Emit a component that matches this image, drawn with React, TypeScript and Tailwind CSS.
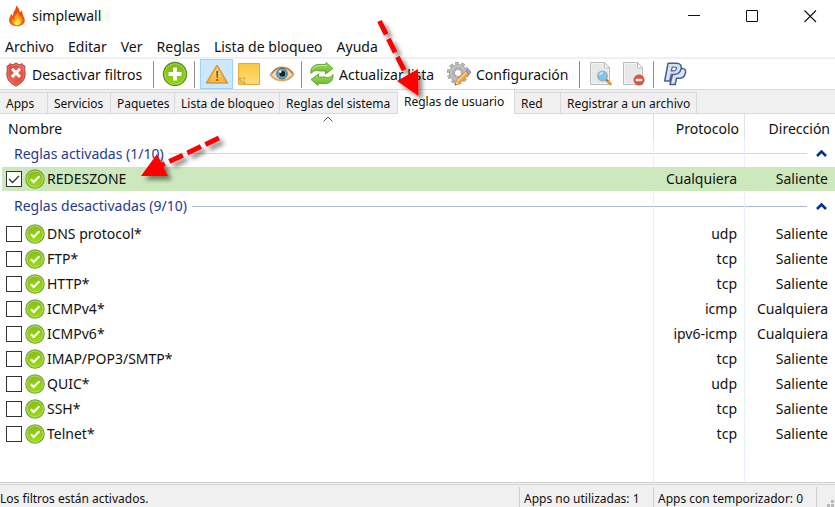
import type { ReactNode } from "react";

const MENU = ["Archivo", "Editar", "Ver", "Reglas", "Lista de bloqueo", "Ayuda"];

const TABS = [
  { label: "Apps", width: "w-[48px]" },
  { label: "Servicios", width: "w-[63px]" },
  { label: "Paquetes", width: "w-[64px]" },
  { label: "Lista de bloqueo", width: "w-[105px]" },
  { label: "Reglas del sistema", width: "w-[118px]" },
  { label: "Reglas de usuario", width: "w-[117px]", active: true },
  { label: "Red", width: "w-[46px]" },
  { label: "Registrar a un archivo", width: "w-[136px]" },
];

const ENABLED = [{ name: "REDESZONE", protocol: "Cualquiera", direction: "Saliente" }];

const DISABLED = [
  { name: "DNS protocol*", protocol: "udp", direction: "Saliente" },
  { name: "FTP*", protocol: "tcp", direction: "Saliente" },
  { name: "HTTP*", protocol: "tcp", direction: "Saliente" },
  { name: "ICMPv4*", protocol: "icmp", direction: "Cualquiera" },
  { name: "ICMPv6*", protocol: "ipv6-icmp", direction: "Cualquiera" },
  { name: "IMAP/POP3/SMTP*", protocol: "tcp", direction: "Saliente" },
  { name: "QUIC*", protocol: "udp", direction: "Saliente" },
  { name: "SSH*", protocol: "tcp", direction: "Saliente" },
  { name: "Telnet*", protocol: "tcp", direction: "Saliente" },
];

function Flame() {
  return (
    <svg width="18" height="22" viewBox="0 0 18 22">
      <defs>
        <linearGradient id="flame" x1="0" y1="0" x2="0" y2="1">
          <stop offset="0" stopColor="#e8400c" />
          <stop offset="1" stopColor="#f5690f" />
        </linearGradient>
      </defs>
      <path
        d="M8 0.500c2 1.500 3.200 3.300 3.400 5.500 .1 1 .9 1.300 1.400.4.400-.7.200-1.500.2-1.500 1.600 1.800 1.700 3.600 2 5 .4 1.700 2 3.200 1.800 5.800-.2 3.200-3.300 5.500-7.800 5.500S1.300 19 1 15.500c-.2-2.400 1.400-3.500 1.600-5.200.1-.9 0-1.500 0-1.500 1.200.6 1.300 1.700 1.900 1.800.8 0 .6-1.300.9-2.600C5.900 5.600 8.600 4 8 .5z"
        fill="url(#flame)"
      />
      <path
        d="M9.500 7c1.500 1.700.9 3.500 1.700 4.300.7.500 1.100-.6 1.100-.6 1.100 1.500 2 3 1.800 5-.2 2.600-2.200 4.500-5 4.500S4.100 18.300 4 16c-.1-1.700.8-2.300.8-2.300s.7 1.300 1.300 1c.8-.5-.2-2 .8-3.600C7.700 9.800 9.400 9 9.500 7z"
        fill="#ff9a1a"
      />
      <path
        d="M9.600 12c.8 1.200.6 2.300 1.300 2.600.6.100.9-.6.900-.6.600 1 .9 1.700.8 2.800-.2 2-1.600 3.500-3.500 3.500s-3.200-1.300-3.200-3c0-.9.300-1.300.3-1.300s.6.900 1.200.6c.9-.6 1.500-2.100 2.200-4.600z"
        fill="#ffe14a"
      />
    </svg>
  );
}

function Shield() {
  return (
    <svg width="20" height="25" viewBox="0 0 20 25">
      <defs>
        <linearGradient id="shield" x1="0" y1="0" x2="1" y2="1">
          <stop offset="0" stopColor="#cf4038" />
          <stop offset=".5" stopColor="#f0604d" />
          <stop offset="1" stopColor="#cf3a30" />
        </linearGradient>
      </defs>
      <path
        d="M10 .8C8.500 2.300 7 2.800 5.500 2.600L4 1.500Q3.500 3.500 1 4.300C1.800 7 .7 10 .9 13c.3 5 3.700 8.500 9.100 11 5.400-2.500 8.800-6 9.100-11 .2-3-.9-6-.1-8.700Q16.500 3.500 16 1.500l-1.500 1.100C13 2.800 11.500 2.300 10 .8z"
        fill="url(#shield)"
        stroke="#a14540"
      />
      <path d="M10 2.300C8.400 3.700 7 4 5.300 3.900L4.500 3.400Q3.800 4.600 2.300 5.100C2.800 7.800 1.800 10.300 2 12.900c.3 4.400 3.300 7.500 8 9.900 4.700-2.400 7.700-5.500 8-9.900.2-2.600-.8-5.100-.3-7.800Q16.200 4.600 15.500 3.400l-.8.500C13 4 11.600 3.700 10 2.300z" fill="none" stroke="#f08a7e" strokeWidth=".7" />
      <path d="M6 6.800l8 8.200M14 6.800L6 15" stroke="#fff" strokeWidth="3" />
    </svg>
  );
}

function Plus() {
  return (
    <svg width="26" height="26" viewBox="0 0 26 26">
      <defs>
        <linearGradient id="plus" x1="0" y1="0" x2="0" y2="1">
          <stop offset="0" stopColor="#82b81d" />
          <stop offset="1" stopColor="#8ed60c" />
        </linearGradient>
      </defs>
      <circle cx="13" cy="13" r="11.500" fill="url(#plus)" stroke="#559013" strokeWidth="1.300" />
      <circle cx="13" cy="13" r="10.300" fill="none" stroke="#b5dc63" strokeWidth=".8" />
      <path d="M13 6.500v13M6.500 13h13" stroke="#fff" strokeWidth="3.800" />
    </svg>
  );
}

function Warning() {
  return (
    <svg width="24" height="22" viewBox="0 0 24 22">
      <defs>
        <linearGradient id="warn" x1="0" y1="0" x2="0" y2="1">
          <stop offset="0" stopColor="#ffda76" />
          <stop offset="1" stopColor="#f8b13a" />
        </linearGradient>
      </defs>
      <path d="M12 2.500L22.500 20H1.500z" fill="url(#warn)" stroke="#dc9a35" strokeWidth="1.500" strokeLinejoin="round" />
      <path d="M11.300 8h1.800l-.4 7h-1z" fill="#55514b" />
      <circle cx="12.200" cy="17" r="1" fill="#55514b" />
    </svg>
  );
}

function Note() {
  return (
    <svg width="24" height="24" viewBox="0 0 24 24">
      <defs>
        <linearGradient id="note" x1="0" y1="0" x2="0" y2="1">
          <stop offset="0" stopColor="#fbc640" />
          <stop offset="1" stopColor="#ffdc7d" />
        </linearGradient>
      </defs>
      <path d="M1.500 1.500h21v21H8.500l-7-6.500z" fill="url(#note)" stroke="#e2a93b" />
      <path d="M1.500 16v6.500h7z" fill="#f4bd4d" stroke="#dfa437" strokeWidth=".8" />
      <path d="M1.500 16q4 2 6-.5q-1.500 4 1 7z" fill="#fce3a0" stroke="#d99c30" strokeWidth=".9" />
    </svg>
  );
}

function Eye() {
  return (
    <svg width="26" height="18" viewBox="0 0 26 18">
      <path d="M1.500 10C5 4.500 8.300 2.500 13 2.500s8.800 2.500 11.500 6.900C21.500 13.500 17.500 15.500 13 15.500S4.500 14 1.500 10z" fill="#ead9bf" stroke="#dba667" strokeWidth="1.800" />
      <path d="M2.500 8.500C6 3.700 9 2.300 13 2.300s7.800 1.800 10.800 6.400" fill="none" stroke="#b0773c" strokeWidth="1.200" />
      <circle cx="13" cy="8.700" r="5.300" fill="#6fa2bd" stroke="#477083" />
      <circle cx="13.300" cy="8.700" r="2.900" fill="#172327" />
      <circle cx="11.300" cy="6.600" r="1.300" fill="#f1f8fb" />
    </svg>
  );
}

function Refresh() {
  return (
    <svg width="26" height="26" viewBox="0 0 26 26">
      <defs>
        <linearGradient id="fresh" x1="0" y1="0" x2="0" y2="1">
          <stop offset="0" stopColor="#a2db5e" />
          <stop offset="1" stopColor="#65b929" />
        </linearGradient>
      </defs>
      <g fill="url(#fresh)" stroke="#5aa32a" strokeWidth=".9" strokeLinejoin="round">
        <path d="M2 12.500C1 6.500 5.500 3 11 3.400h6V1.500l7 6-7.500 5.500v-3h-5.500C8 9.500 5.500 8.500 2 12.500z" />
        <path d="M24 13.500c1 6-3.500 9.500-9 9.100H9v1.900l-7-6L9.500 13v3H15c3 .5 5.500 1.500 9-2.500z" />
      </g>
      <path d="M3.500 9C5 5.800 8 4.300 12 4.600h5.500" fill="none" stroke="#cdeeaa" strokeWidth=".8" />
    </svg>
  );
}

function Gear() {
  return (
    <svg width="26" height="26" viewBox="0 0 26 26">
      <circle cx="12" cy="12" r="9.300" fill="none" stroke="#969696" strokeWidth="3.600" strokeDasharray="3.400 2.443" />
      <circle cx="12" cy="12" r="9.300" fill="none" stroke="#bdbdbd" strokeWidth="2.400" strokeDasharray="2.400 3.443" strokeDashoffset="-.5" />
      <circle cx="12" cy="12" r="6" fill="none" stroke="#969696" strokeWidth="6" />
      <circle cx="12" cy="12" r="6" fill="none" stroke="#bfbfbf" strokeWidth="4.800" />
      <circle cx="12" cy="12" r="5" fill="none" stroke="#a4a4a4" strokeWidth="1" />
      <path d="M9 24l1.300-4.200L20 10.200l3.200 3-9.700 9.500z" fill="#f6a940" stroke="#cc7b2e" strokeWidth=".8" />
      <path d="M11 20.500L20.500 11" stroke="#ffda8d" strokeWidth="1.200" />
      <path d="M20 10.200l1.300-1.300q1.200-.8 2.500.5 1.400 1.300.6 2.500l-1.200 1.300z" fill="#a9a0d0" stroke="#7d76ad" strokeWidth=".8" />
      <path d="M9 24l1.300-4.200 3.200 2.900z" fill="#f8dfb9" stroke="#be803c" strokeWidth=".6" />
      <path d="M9 24l.5-1.600 1.100 1.100z" fill="#444" />
    </svg>
  );
}

function Doc({ children }: { children: ReactNode }) {
  return (
    <svg width="24" height="26" viewBox="0 0 24 26">
      <path d="M1.500 1.500h14l5 5.500v16.500h-19z" fill="#f4f5f5" stroke="#b9bdbd" />
      <path d="M2.800 2.800h12v5h4.500v14.400H2.800z" fill="#e6e9e9" />
      <path d="M15.500 1.500V7h5z" fill="#fdfdfd" stroke="#b9bdbd" strokeLinejoin="round" />
      {children}
    </svg>
  );
}

function DocSearch() {
  return (
    <Doc>
      <path d="M18.500 20l3 3" stroke="#e59a38" strokeWidth="3" strokeLinecap="round" />
      <path d="M16.500 18l2 2" stroke="#787878" strokeWidth="2" />
      <circle cx="13.500" cy="15" r="4.800" fill="#7cc6ef" stroke="#a3a9ab" strokeWidth="1.300" />
      <path d="M10.500 14q1-2.500 3.500-2.300" stroke="#d5f0ff" strokeWidth="1.500" fill="none" />
    </Doc>
  );
}

function DocRemove() {
  return (
    <Doc>
      <circle cx="17" cy="19" r="5" fill="#e9513d" stroke="#d2483b" />
      <path d="M13.700 19h6.600" stroke="#fff" strokeWidth="2.400" />
    </Doc>
  );
}

function PayPal() {
  return (
    <svg width="25" height="26" viewBox="0 0 25 26">
      <g strokeLinejoin="round" stroke="#3f6299" strokeWidth="1.500">
        <path d="M11 7.500h8.500c2.500 0 3.500 1.800 3 4.300-.8 3.800-3 5.400-6.200 5.400h-2.800l-1.300 6.300H7z" fill="#dfe4ea" />
        <path d="M5 2.300h8.300c4 0 5.500 2.100 4.800 5.400-.9 4.200-3.500 5.800-7.300 5.800H8.300L6.800 20H1.700z" fill="#d9e0e9" />
        <path d="M9.300 6h2.200c1.600 0 2.200.7 1.900 1.900-.3 1.500-1.300 2-2.800 2H8.400z" fill="#fff" strokeWidth="1.200" />
      </g>
    </svg>
  );
}

function GreenCheck() {
  return (
    <svg className="shrink-0" width="20" height="20" viewBox="0 0 20 20" aria-hidden="true">
      <defs>
        <linearGradient id="ok" x1="0" y1="0" x2="0" y2="1">
          <stop offset="0" stopColor="#86bb1c" />
          <stop offset="1" stopColor="#9be00c" />
        </linearGradient>
      </defs>
      <circle cx="10" cy="10" r="9.200" fill="url(#ok)" stroke="#76a53c" strokeWidth="1.200" />
      <circle cx="10" cy="10" r="8.100" fill="none" stroke="#bfe084" strokeWidth=".8" />
      <path d="M5.800 10.200l2.900 2.800 5.700-5.800" fill="none" stroke="#fff" strokeWidth="2.200" />
    </svg>
  );
}

function Separator({ className }: { className: string }) {
  return <span className={`h-[27px] w-px shrink-0 bg-[#8c8c8c] ${className}`} />;
}

function Tool({ label, className, children }: { label: string; className: string; children: ReactNode }) {
  return (
    <button type="button" aria-label={label} className={`flex h-[30px] shrink-0 items-center justify-center ${className}`}>
      {children}
    </button>
  );
}

type Rule = { name: string; protocol: string; direction: string };

function RuleRow({ rule, checked = false }: { rule: Rule; checked?: boolean }) {
  const line = checked ? "border-[#cde8bc]" : "border-[#e6f1fc]";
  return (
    <tr className={checked ? "h-6" : "h-[25px]"}>
      <td className="p-0 pl-[2px]">
        <label className={`flex items-center pl-1 ${checked ? "h-6 bg-[#cde8bc]" : "h-[25px]"}`}>
          <span className="relative mr-[3px] flex size-4">
            <input
              type="checkbox"
              defaultChecked={checked}
              className="peer size-4 appearance-none border border-[#333] bg-white"
            />
            <svg className="pointer-events-none absolute inset-0 hidden peer-checked:block" width="16" height="16" viewBox="0 0 16 16">
              <path d="M3 8l3.500 3.500L13 5" fill="none" stroke="#333" strokeWidth="1.300" />
            </svg>
          </span>
          <GreenCheck />
          <span className="ml-[2px]">{rule.name}</span>
        </label>
      </td>
      <td className={`border-l p-0 pr-[7px] text-right ${line} ${checked ? "bg-[#cde8bc]" : ""}`}>{rule.protocol}</td>
      <td className={`border-l p-0 pr-[7px] text-right ${line} ${checked ? "bg-[#cde8bc]" : ""}`}>{rule.direction}</td>
    </tr>
  );
}

function GroupRow({ title, className, line }: { title: string; className: string; line: string }) {
  return (
    <tr className={`text-[#1f3a93] ${className}`}>
      <th scope="rowgroup" className="p-0 pl-[14px] font-normal">
        <div className="flex items-center gap-[5px]">
          <span className="whitespace-nowrap">{title}</span>
          <span className={`h-px flex-1 ${line}`} />
        </div>
      </th>
      <td className="border-l border-[#e6f1fc] p-0">
        <div className={`h-px ${line}`} />
      </td>
      <td className="border-l border-[#e6f1fc] p-0 pr-2">
        <div className="flex items-center gap-[9px]">
          <span className={`h-px flex-1 ${line}`} />
          <button type="button" aria-label="Contraer grupo">
            <svg className="block" width="11" height="7" viewBox="0 0 11 7">
              <path d="M1 6l4.500-4.500L10 6" fill="none" stroke="#003399" strokeWidth="2.600" />
            </svg>
          </button>
        </div>
      </td>
    </tr>
  );
}

export default function App() {
  return (
    <div className="relative flex h-screen flex-col overflow-hidden bg-white font-['Noto_Sans','Open_Sans',sans-serif] text-[14px] leading-5 text-[#111]">
      <header className="flex h-[32px] shrink-0 items-center pl-2">
        <Flame />
        <h1 className="ml-[6px] flex-1">simplewall</h1>
        <button type="button" aria-label="Minimizar" className="flex h-[30px] w-[58px] items-center justify-center">
          <svg width="13" height="13" viewBox="0 0 13 13"><path d="M0 5.500h12" stroke="#111" /></svg>
        </button>
        <button type="button" aria-label="Maximizar" className="flex h-[30px] w-[58px] items-center justify-center">
          <svg width="13" height="13" viewBox="0 0 13 13"><path d="M.5.5h11v11H.5z" fill="none" stroke="#111" /></svg>
        </button>
        <button type="button" aria-label="Cerrar" className="flex h-[30px] w-[54px] items-center justify-center pl-1">
          <svg width="13" height="13" viewBox="0 0 13 13"><path d="M.5.500l11.500 11.500M12 .500L.5 12" stroke="#111" strokeWidth="1.100" /></svg>
        </button>
      </header>

      <nav className="flex h-[27px] shrink-0 items-end gap-[14px] border-b-2 border-[#f0f0f0] pl-[5px]">
        {MENU.map((item) => (
          <button key={item} type="button" className="h-5 whitespace-nowrap">{item}</button>
        ))}
      </nav>

      <div className="flex h-[31px] shrink-0 items-center border-b border-[#d9d9d9]" role="toolbar">
        <button type="button" className="ml-[6px] flex w-[137px] shrink-0 items-center gap-[6px] whitespace-nowrap">
          <Shield />
          <span className="pt-px">Desactivar filtros</span>
        </button>
        <Separator className="ml-[10px]" />
        <Tool label="Añadir" className="mx-2 w-[26px]"><Plus /></Tool>
        <Separator className="ml-[-2px]" />
        <Tool label="Notificaciones" className="ml-[5px] w-[33px] border border-[#99d1ff] bg-[#cce8ff]"><Warning /></Tool>
        <Tool label="Registro" className="ml-1 w-6"><Note /></Tool>
        <Tool label="Monitor" className="ml-2 w-[26px]"><Eye /></Tool>
        <Separator className="ml-[6px]" />
        <button type="button" className="ml-[7px] flex w-[127px] shrink-0 items-center gap-1 whitespace-nowrap">
          <Refresh />
          <span className="pt-px">Actualizar lista</span>
        </button>
        <button type="button" className="ml-[10px] flex w-[124px] shrink-0 items-center gap-1 whitespace-nowrap">
          <Gear />
          <span className="pt-px">Configuración</span>
        </button>
        <Separator className="ml-[9px]" />
        <Tool label="Ver registro" className="ml-[9px] w-6"><DocSearch /></Tool>
        <Tool label="Borrar registro" className="ml-[9px] w-6"><DocRemove /></Tool>
        <Separator className="ml-[7px]" />
        <Tool label="Donar" className="ml-[9px] w-[25px]"><PayPal /></Tool>
      </div>

      <div className="flex h-6 shrink-0 items-end bg-[#f0f0f0] text-[12px] leading-4" role="tablist">
        {TABS.map((tab) => (
          <button
            key={tab.label}
            type="button"
            role="tab"
            aria-selected={Boolean(tab.active)}
            className={`shrink-0 whitespace-nowrap border-r border-[#d9d9d9] pl-[6px] text-left ${tab.width} ${
              tab.active ? "h-6 bg-white" : "h-[22px] border-y pt-[2px]"
            }`}
          >
            {tab.label}
          </button>
        ))}
        <span className="h-6 flex-1 border-b border-[#d9d9d9]" />
      </div>

      <main className="min-h-0 flex-1">
        <table className="h-full w-full table-fixed border-separate border-spacing-0 text-left">
          <colgroup>
            <col />
            <col className="w-[91px]" />
            <col className="w-[91px]" />
          </colgroup>
          <thead>
            <tr className="h-[26px]">
              <th scope="col" className="relative p-0 pl-2 pt-1 font-normal">
                Nombre
                <svg className="absolute left-[323px] top-[2px]" width="10" height="6" viewBox="0 0 10 6">
                  <path d="M.5 5.500L5 1l4.500 4.500" fill="none" stroke="#555" />
                </svg>
              </th>
              <th scope="col" className="border-l border-[#e2e2e2] p-0 pr-[5px] pt-1 text-right font-normal">Protocolo</th>
              <th scope="col" className="border-l border-[#e2e2e2] p-0 pr-[5px] pt-1 text-right font-normal">Dirección</th>
            </tr>
          </thead>
          <tbody>
            <GroupRow title="Reglas activadas (1/10)" className="h-[27px]" line="bg-[#cfdae9]" />
            {ENABLED.map((rule) => <RuleRow key={rule.name} rule={rule} checked />)}
            <GroupRow title="Reglas desactivadas (9/10)" className="h-[30px]" line="bg-[#a9bad8]" />
            {DISABLED.map((rule) => <RuleRow key={rule.name} rule={rule} />)}
            <tr aria-hidden="true">
              <td className="p-0" />
              <td className="border-l border-[#e6f1fc] p-0" />
              <td className="border-l border-[#e6f1fc] p-0" />
            </tr>
          </tbody>
        </table>
      </main>

      <footer className="flex h-[25px] shrink-0 flex-col border-t border-[#d0d0d0] bg-[#f0f0f0] pt-px text-[12px] leading-4">
        <div className="flex flex-1 items-stretch border-t border-[#d7d7d7] pt-[2px]">
          <span className="flex flex-1 items-center pt-[3px]">Los filtros están activados.</span>
          <span className="flex w-[134px] items-center border-l border-[#d0d0d0] pl-1 pt-[3px]">Apps no utilizadas: 1</span>
          <span className="flex w-[164px] items-center border-x border-[#d0d0d0] pl-1 pt-[3px]">Apps con temporizador: 0</span>
          <span className="flex w-[18px] items-end justify-end">
            <svg width="8" height="8" viewBox="0 0 8 8" fill="#b8b8b8">
              <path d="M4 1h3v3H4zM0 5h3v3H0zM4 5h3v3H4z" />
            </svg>
          </span>
        </div>
      </footer>

      <svg className="pointer-events-none absolute left-0 top-0 overflow-visible" width="450" height="200" viewBox="0 0 450 200" aria-hidden="true">
        <defs>
          <filter id="shadow" x="-20%" y="-20%" width="150%" height="150%">
            <feDropShadow dx="4" dy="4" stdDeviation="2" floodColor="#000" floodOpacity=".45" />
          </filter>
        </defs>
        <g fill="#f00" stroke="none" filter="url(#shadow)">
          <path d="M379.500 21L406 74" stroke="#f00" strokeWidth="5" strokeDasharray="15 5" />
          <path d="M397 81l21-12 .5 27z" />
          <path d="M219 138L160 166" stroke="#f00" strokeWidth="5" strokeDasharray="15 5" />
          <path d="M141 176l16-22 11 22z" />
        </g>
      </svg>
    </div>
  );
}
